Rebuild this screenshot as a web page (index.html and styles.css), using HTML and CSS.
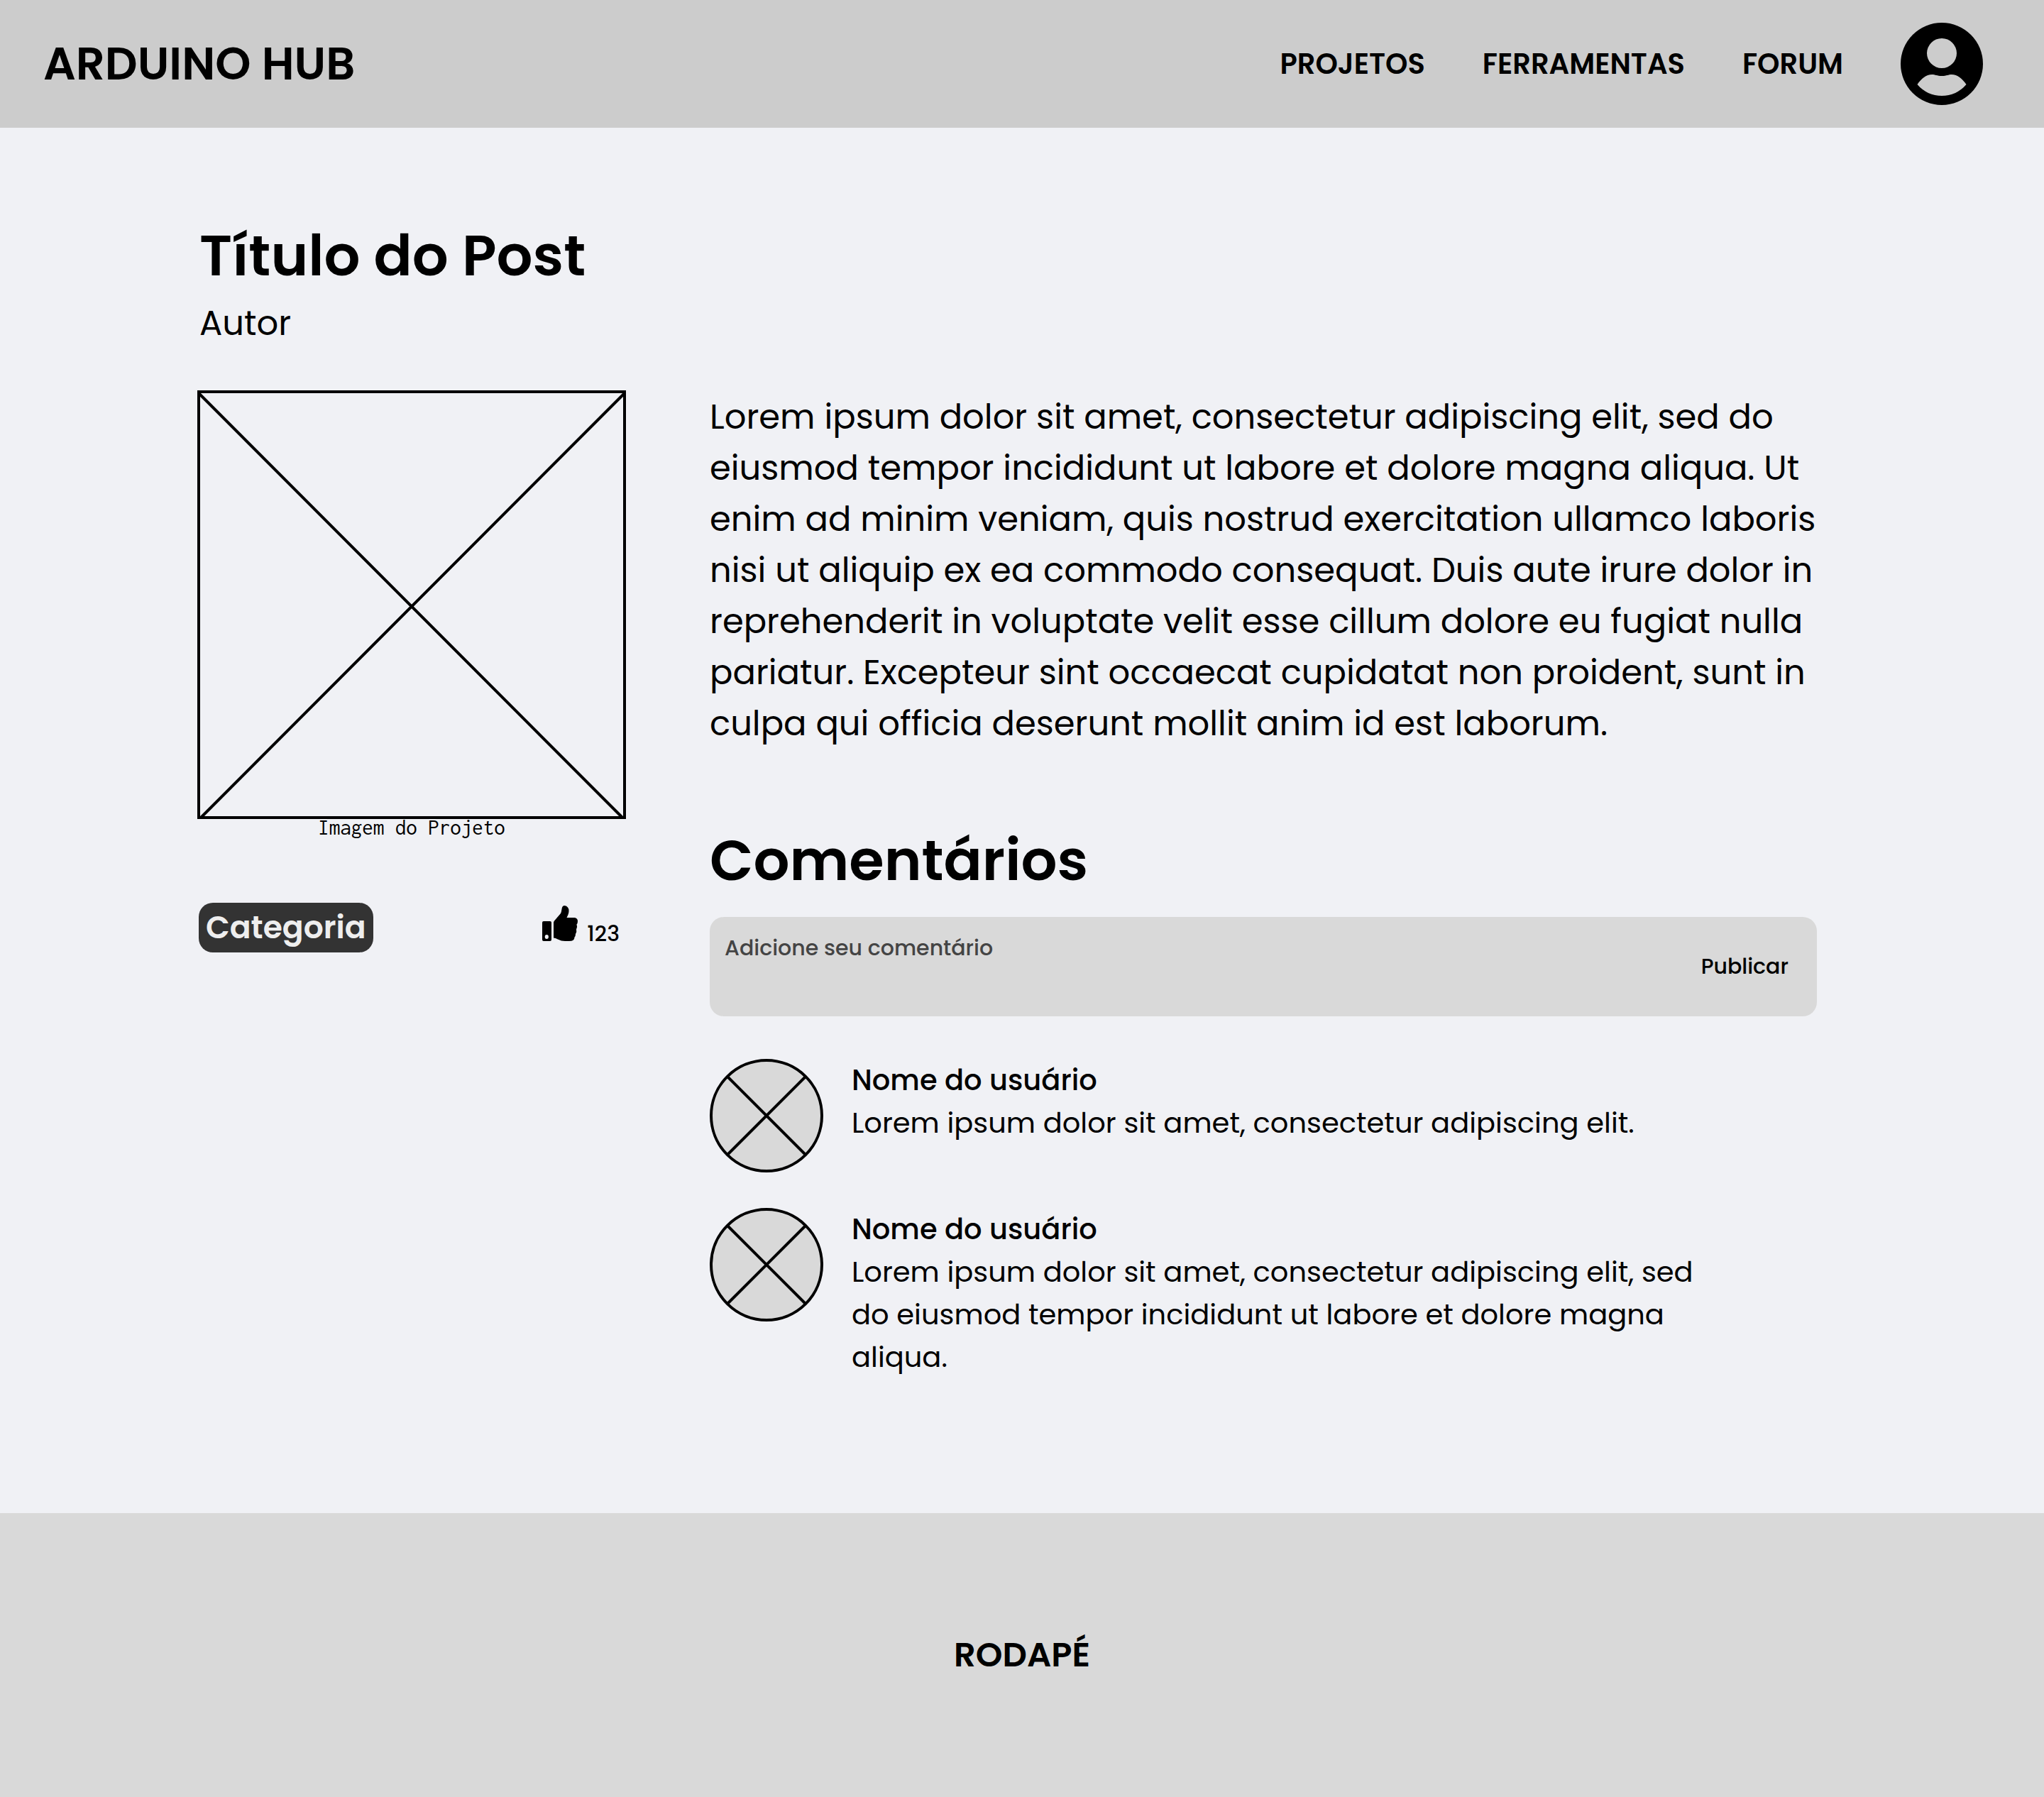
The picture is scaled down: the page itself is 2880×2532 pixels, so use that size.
FILE: index.html
```html
<!DOCTYPE html>
<html lang="pt-BR">
<head>
<meta charset="utf-8">
<meta name="viewport" content="width=device-width, initial-scale=1">
<title>Arduino Hub</title>
<link rel="stylesheet" href="styles.css">
</head>
<body>
<header class="topbar">
  <a class="brand" href="#">ARDUINO HUB</a>
  <nav class="nav">
    <a href="#">PROJETOS</a>
    <a href="#">FERRAMENTAS</a>
    <a href="#">FORUM</a>
    <a class="account" href="#" aria-label="Minha conta">
      <svg viewBox="0 0 116 116" aria-hidden="true"><path fill-rule="evenodd" d="M58 0a58 58 0 1 0 0 116a58 58 0 1 0 0-116zM58 22a21 21 0 1 1 0 42a21 21 0 1 1 0-42zM23.500 87C29 79 36 73 44 73C49 73 51 75 58 75S67 73 72 73C80 73 87 79 92.500 87A45 45 0 0 1 23.500 87z"/></svg>
    </a>
  </nav>
</header>

<main class="post">
  <div class="post-head">
    <h1 class="title">Título do Post</h1>
    <p class="author">Autor</p>
  </div>
  <div class="columns">
    <aside class="side">
      <figure class="figure">
        <svg class="picture" viewBox="0 0 604 604" aria-hidden="true"><path d="M2 2H602V602H2zM3 5L599 602M601 5L5 602"/></svg>
        <figcaption>Imagem do Projeto</figcaption>
      </figure>
      <div class="meta">
        <a class="tag" href="#">Categoria</a>
        <button class="like" type="button" aria-label="Curtir, 123">
          <svg viewBox="0 0 50 50" aria-hidden="true"><path fill-rule="evenodd" d="M2 22H11Q13 22 13 24V48Q13 50 11 50H2Q0 50 0 48V24Q0 22 2 22zM6.300 41a2.600 3 0 1 0 0 6a2.600 3 0 1 0 0-6z"/><path d="M16 24Q16 22.500 17 21.500L26 11Q27 9 27.500 5Q28 0 31.500 0Q37.500 1 37.500 7.500Q37.500 11.500 34.500 17H46Q50 18 50 22Q50 25 48.500 26.500Q50 30 48 33.500Q49 37 47 40Q47 43 45.500 44.500Q45.500 50 38 50H32Q27 50 22 47.500Q18.500 45.500 16 45.500z"/></svg>
          <span>123</span>
        </button>
      </div>
    </aside>

    <div class="content">
      <p class="body-text">Lorem ipsum dolor sit amet, consectetur adipiscing elit, sed do eiusmod tempor incididunt ut labore et dolore magna aliqua. Ut enim ad minim veniam, quis nostrud exercitation ullamco laboris nisi ut aliquip ex ea commodo consequat. Duis aute irure dolor in reprehenderit in voluptate velit esse cillum dolore eu fugiat nulla pariatur. Excepteur sint occaecat cupidatat non proident, sunt in culpa qui officia deserunt mollit anim id est laborum.</p>
      <section class="comments">
        <h2 class="title">Comentários</h2>
        <form class="composer">
          <textarea aria-label="Adicione seu comentário" placeholder="Adicione seu comentário"></textarea>
          <button type="button">Publicar</button>
        </form>
        <ul class="comment-list">
          <li class="comment">
            <svg class="avatar" viewBox="0 0 160 160" aria-hidden="true"><circle cx="80" cy="80" r="78"/><path d="M25 25L135 135M135 25L25 135"/></svg>
            <div class="comment-text">
              <h3>Nome do usuário</h3>
              <p>Lorem ipsum dolor sit amet, consectetur adipiscing elit.</p>
            </div>
          </li>
          <li class="comment">
            <svg class="avatar" viewBox="0 0 160 160" aria-hidden="true"><circle cx="80" cy="80" r="78"/><path d="M25 25L135 135M135 25L25 135"/></svg>
            <div class="comment-text">
              <h3>Nome do usuário</h3>
              <p>Lorem ipsum dolor sit amet, consectetur adipiscing elit, sed do eiusmod tempor incididunt ut labore et dolore magna aliqua.</p>
            </div>
          </li>
        </ul>
      </section>
    </div>
  </div>
</main>

<footer class="footer">RODAPÉ</footer>
</body>
</html>
```
FILE: styles.css
```css
* {
  box-sizing: border-box;
  margin: 0;
  padding: 0;
}

body {
  display: flex;
  flex-direction: column;
  min-height: 100vh;
  background: #f0f1f5;
  color: #000;
  font-family: Poppins, Inter, sans-serif;
  font-size: 48px;
  line-height: 72px;
}

a {
  color: inherit;
  text-decoration: none;
}

button,
textarea {
  border: 0;
  background: none;
  color: inherit;
  font: inherit;
}

.topbar {
  display: flex;
  align-items: center;
  justify-content: space-between;
  min-height: 180px;
  padding: 32px 86px 32px 61px;
  background: #ccc;
  font-weight: 600;
}

.brand {
  font-size: 64px;
  line-height: 96px;
}

.nav {
  display: flex;
  align-items: center;
  gap: 81px;
  font-size: 40px;
  line-height: 60px;
}

.account {
  width: 116px;
  height: 116px;
}

.account svg {
  display: block;
}

.post {
  flex: 1;
  padding: 120px 320px 190px 278px;
}

.post-head {
  padding-left: 3px;
}

.title {
  font-size: 80px;
  font-weight: 600;
  line-height: 120px;
}

.columns {
  display: grid;
  grid-template-columns: 604px 1fr;
  gap: 118px;
  align-items: start;
  margin-top: 58px;
}

.picture {
  display: block;
  width: 100%;
  fill: none;
  stroke: #000;
  stroke-width: 4;
}

.figure figcaption {
  font-family: Inconsolata, Consolas, "Liberation Mono", monospace;
  font-size: 31px;
  line-height: 24px;
  text-align: center;
}

.meta {
  display: flex;
  align-items: center;
  justify-content: space-between;
  margin-top: 94px;
  padding: 0 9px 0 2px;
}

.tag {
  padding: 0 10px;
  border-radius: 20px;
  background: #333;
  color: #eee;
  font-size: 44px;
  font-weight: 600;
  line-height: 70px;
}

.like {
  display: flex;
  align-items: flex-start;
  gap: 13px;
  font-size: 30px;
  font-weight: 500;
  line-height: 46px;
}

.like svg {
  width: 50px;
  height: 50px;
}

.like span {
  padding-top: 17px;
}

.content {
  padding-top: 2px;
}

.comments {
  margin-top: 96px;
}

.composer {
  display: flex;
  align-items: center;
  min-height: 140px;
  margin-top: 20px;
  padding: 20px 40px 20px 21px;
  border-radius: 20px;
  background: #d9d9d9;
  font-size: 30px;
  font-weight: 500;
  line-height: 46px;
}

.composer textarea {
  flex: 1;
  height: 98px;
  resize: none;
  outline: 0;
}

.composer textarea::placeholder {
  color: #444;
  opacity: 1;
}

.comment-list {
  display: grid;
  gap: 50px;
  margin-top: 60px;
  list-style: none;
}

.comment {
  display: flex;
  align-items: flex-start;
  gap: 40px;
  font-size: 40px;
  line-height: 60px;
}

.comment h3 {
  font-size: 40px;
  font-weight: 500;
}

.comment-text {
  flex: 1;
  max-width: 1200px;
}

.avatar {
  flex: none;
  width: 160px;
  height: 160px;
  fill: #d9d9d9;
  stroke: #000;
  stroke-width: 4;
}

.footer {
  display: flex;
  align-items: center;
  justify-content: center;
  min-height: 400px;
  background: #d9d9d9;
  font-weight: 600;
}
```
